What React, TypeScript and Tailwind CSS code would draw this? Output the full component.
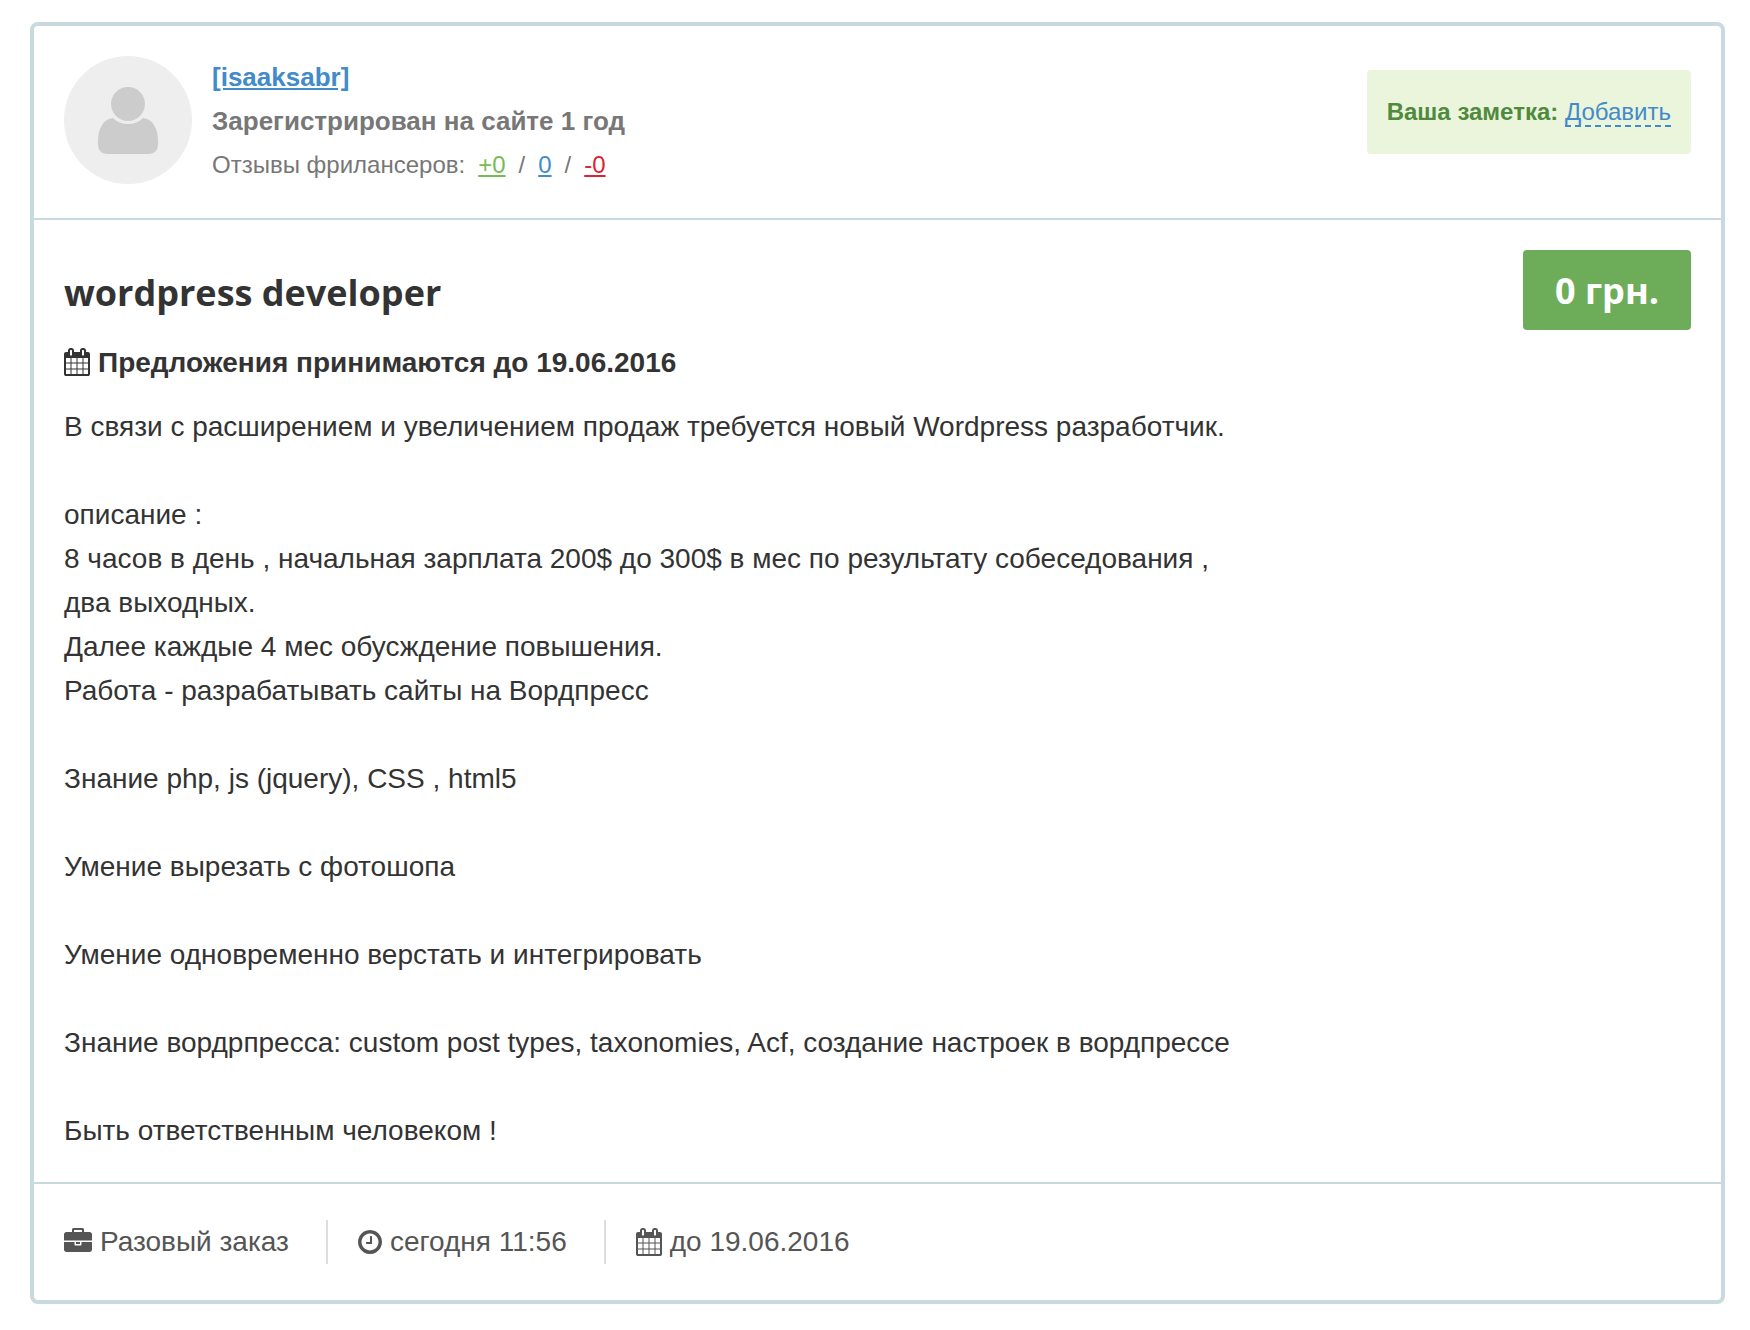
import React from "react";

type IconProps = {
  className?: string;
};

const CalendarIcon = ({ className }: IconProps) => (
  <svg viewBox="64 0 1664 1792" fill="currentColor" className={className} aria-hidden="true">
    <path d="M192 1664h288v-288h-288v288zm352 0h320v-288h-320v288zm-352-352h288v-320h-288v320zm352 0h320v-320h-320v320zm-352-384h288v-288h-288v288zm736 736h320v-288h-320v288zm-384-736h320v-288h-320v288zm768 736h288v-288h-288v288zm-384-352h320v-320h-320v320zm-352-864v-288q0-13-9.5-22.5t-22.5-9.5h-64q-13 0-22.5 9.5t-9.5 22.5v288q0 13 9.5 22.5t22.5 9.5h64q13 0 22.5-9.5t9.5-22.5zm736 864h288v-320h-288v320zm-384-384h320v-288h-320v288zm384 0h288v-288h-288v288zm32-480v-288q0-13-9.5-22.5t-22.5-9.5h-64q-13 0-22.5 9.5t-9.5 22.5v288q0 13 9.5 22.5t22.5 9.5h64q13 0 22.5-9.5t9.5-22.5zm384-64v1280q0 52-38 90t-90 38h-1408q-52 0-90-38t-38-90v-1280q0-52 38-90t90-38h128v-96q0-66 47-113t113-47h64q66 0 113 47t47 113v96h384v-96q0-66 47-113t113-47h64q66 0 113 47t47 113v96h128q52 0 90 38t38 90z" />
  </svg>
);

const BriefcaseIcon = ({ className }: IconProps) => (
  <svg viewBox="0 0 1792 1536" fill="currentColor" className={className} aria-hidden="true">
    <path d="M640 256h512v-128h-512v128zm1152 640v480q0 66-47 113t-113 47h-1472q-66 0-113-47t-47-113v-480h672v160q0 26 19 45t45 19h320q26 0 45-19t19-45v-160h672zm-768 0v128h-256v-128h256zm768-480v384h-1792v-384q0-66 47-113t113-47h352v-160q0-40 28-68t68-28h576q40 0 68 28t28 68v160h352q66 0 113 47t47 113z" />
  </svg>
);

const ClockIcon = ({ className }: IconProps) => (
  <svg viewBox="128 128 1536 1536" fill="currentColor" className={className} aria-hidden="true">
    <path d="M1024 544v448q0 14-9 23t-23 9h-320q-14 0-23-9t-9-23v-64q0-14 9-23t23-9h224v-352q0-14 9-23t23-9h64q14 0 23 9t9 23zm416 352q0-148-73-273t-198-198-273-73-273 73-198 198-73 273 73 273 198 198 273 73 273-73 198-198 73-273zm224 0q0 209-103 385.5t-279.5 279.5-385.5 103-385.5-103-279.5-279.5-103-385.5 103-385.5 279.5-279.5 385.5-103 385.5 103 279.5 279.5 103 385.5z" />
  </svg>
);

const Avatar = () => (
  <svg viewBox="0 0 128 128" className="size-32 shrink-0" role="img" aria-label="isaaksabr">
    <circle cx="64" cy="64" r="64" fill="#eeeeee" />
    <path
      d="M49 62c-10 1-15 11-15 23v3c0 7 4 10 10 10h40c6 0 10-3 10-10v-3c0-12-5-22-15-23-4 4-9 6-15 6s-11-2-15-6z"
      fill="#cccccc"
    />
    <circle cx="64" cy="48" r="17" fill="#cccccc" />
  </svg>
);

const description = `В связи с расширением и увеличением продаж требуется новый Wordpress разработчик.

описание :
8 часов в день , начальная зарплата 200$ до 300$ в мес по результату собеседования ,
два выходных.
Далее каждые 4 мес обусждение повышения.
Работа - разрабатывать сайты на Вордпресс

Знание php, js (jquery), CSS , html5

Умение вырезать с фотошопа

Умение одновременно верстать и интегрировать

Знание вордрпресса: custom post types, taxonomies, Acf, создание настроек в вордпрессе

Быть ответственным человеком !`;

const App = () => {
  return (
    <main className="pt-[22px] pb-[26px] pl-[30px] pr-[25px] font-['Liberation_Sans',Arial,sans-serif] text-[28px] leading-[44px] text-[#333333]">
      <article className="rounded-lg border-4 border-[#c8d9df] bg-white">
        <header className="flex items-start border-b-2 border-[#c8d9df] px-[30px] pt-[30px] pb-[31px]">
          <Avatar />
          <div className="-mt-px ml-5 grow text-[#777777]">
            <a href="#profile" className="block w-fit text-[26px] font-bold text-[#428bca] underline">
              [isaaksabr]
            </a>
            <p className="text-[26px] font-bold">Зарегистрирован на сайте 1 год</p>
            <p className="flex gap-[13px] text-[24px]">
              <span>Отзывы фрилансеров:</span>
              <a href="#positive" className="text-[#77bb55] underline">+0</a>
              <span>/</span>
              <a href="#neutral" className="text-[#428bca] underline">0</a>
              <span>/</span>
              <a href="#negative" className="text-[#dd2233] underline">-0</a>
            </p>
          </div>
          <div className="mt-[14px] rounded bg-[#ebf5dc] p-5 text-[24px]">
            <strong className="text-[#4f8a3d]">Ваша заметка:</strong>{" "}
            <a href="#note" className="border-b-2 border-dashed border-[#428bca] text-[#428bca]">
              Добавить
            </a>
          </div>
        </header>

        <section className="border-b-2 border-[#c8d9df] px-[30px] pt-[30px] pb-[29px]">
          <div className="flex items-start justify-between">
            <h1 className="mt-[19px] mb-6 font-['Open_Sans',sans-serif] text-[36px] leading-[48px] font-bold">
              wordpress developer
            </h1>
            <span className="rounded bg-[#6dad5a] px-8 pt-0.5 font-['Open_Sans',sans-serif] text-[36px] leading-[78px] font-bold text-white">
              0 грн.
            </span>
          </div>
          <p className="mb-5 flex items-center gap-2 font-bold">
            <CalendarIcon className="mb-0.5 h-7 w-[26px]" />
            Предложения принимаются до 19.06.2016
          </p>
          <p className="whitespace-pre-line">{description}</p>
        </section>

        <footer className="px-[30px] py-9 text-[#555555]">
          <ul className="flex">
            <li className="flex items-center gap-2 border-r-2 border-[#dddddd] pr-[37px]">
              <BriefcaseIcon className="mb-1 h-6 w-7" />
              Разовый заказ
            </li>
            <li className="flex items-center gap-2 border-r-2 border-[#dddddd] pr-[37px] pl-[30px]">
              <ClockIcon className="size-6" />
              сегодня 11:56
            </li>
            <li className="flex items-center gap-2 pl-[30px]">
              <CalendarIcon className="h-7 w-[26px]" />
              до 19.06.2016
            </li>
          </ul>
        </footer>
      </article>
    </main>
  );
};

export default App;
